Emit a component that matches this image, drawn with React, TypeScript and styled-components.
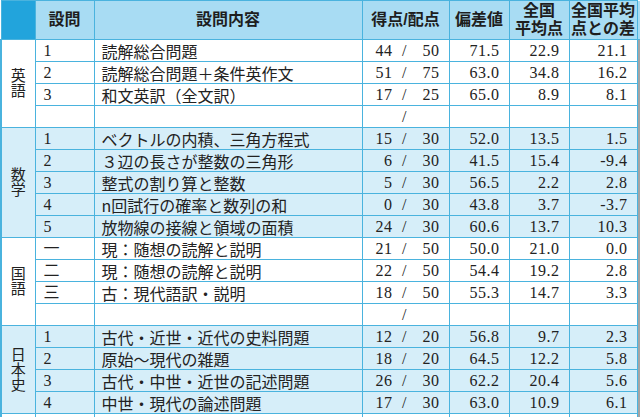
import React from 'react';
import styled, {createGlobalStyle} from 'styled-components';

const GlobalStyle = createGlobalStyle`
  html, body {
    margin: 0;
    padding: 0;
    background: #fff;
    overflow: hidden;
  }
`;

const LINE = '#4ab3de';
const HEAD_BG = '#a8dcf3';
const CORNER_BG = '#22a4dc';
const STRIPE_BG = '#d6eef9';

type Row = {
  no?: string;
  content?: string;
  got?: string;
  full?: string;
  dev?: string;
  avg?: string;
  diff?: string;
};

type Group = {
  subject: string;
  striped: boolean;
  rows: Row[];
};

const blank: Row = {};

const groups: Group[] = [
  {
    subject: '英語',
    striped: false,
    rows: [
      {no: '1', content: '読解総合問題', got: '44', full: '50', dev: '71.5', avg: '22.9', diff: '21.1'},
      {no: '2', content: '読解総合問題＋条件英作文', got: '51', full: '75', dev: '63.0', avg: '34.8', diff: '16.2'},
      {no: '3', content: '和文英訳（全文訳）', got: '17', full: '25', dev: '65.0', avg: '8.9', diff: '8.1'},
      blank,
    ],
  },
  {
    subject: '数学',
    striped: true,
    rows: [
      {no: '1', content: 'ベクトルの内積、三角方程式', got: '15', full: '30', dev: '52.0', avg: '13.5', diff: '1.5'},
      {no: '2', content: '３辺の長さが整数の三角形', got: '6', full: '30', dev: '41.5', avg: '15.4', diff: '-9.4'},
      {no: '3', content: '整式の割り算と整数', got: '5', full: '30', dev: '56.5', avg: '2.2', diff: '2.8'},
      {no: '4', content: 'n回試行の確率と数列の和', got: '0', full: '30', dev: '43.8', avg: '3.7', diff: '-3.7'},
      {no: '5', content: '放物線の接線と領域の面積', got: '24', full: '30', dev: '60.6', avg: '13.7', diff: '10.3'},
    ],
  },
  {
    subject: '国語',
    striped: false,
    rows: [
      {no: '一', content: '現：随想の読解と説明', got: '21', full: '50', dev: '50.0', avg: '21.0', diff: '0.0'},
      {no: '二', content: '現：随想の読解と説明', got: '22', full: '50', dev: '54.4', avg: '19.2', diff: '2.8'},
      {no: '三', content: '古：現代語訳・説明', got: '18', full: '50', dev: '55.3', avg: '14.7', diff: '3.3'},
      blank,
    ],
  },
  {
    subject: '日本史',
    striped: true,
    rows: [
      {no: '1', content: '古代・近世・近代の史料問題', got: '12', full: '20', dev: '56.8', avg: '9.7', diff: '2.3'},
      {no: '2', content: '原始～現代の雑題', got: '18', full: '20', dev: '64.5', avg: '12.2', diff: '5.8'},
      {no: '3', content: '古代・中世・近世の記述問題', got: '26', full: '30', dev: '62.2', avg: '20.4', diff: '5.6'},
      {no: '4', content: '中世・現代の論述問題', got: '17', full: '30', dev: '63.0', avg: '10.9', diff: '6.1'},
    ],
  },
  {
    subject: '',
    striped: false,
    rows: [blank],
  },
];

const Sheet = styled.table`
  border-collapse: collapse;
  table-layout: fixed;
  width: 640px;
  font-family: 'Noto Sans CJK JP', sans-serif;
  font-size: 16px;
  color: #222;
`;

const HeadRow = styled.tr`
  height: 39px;
`;

const HeadCell = styled.th<{$corner?: boolean}>`
  padding: 0;
  border: 1px solid ${LINE};
  background: ${(p) => (p.$corner ? CORNER_BG : HEAD_BG)};
  font-family: 'Liberation Sans', 'Noto Sans CJK JP', sans-serif;
  font-weight: 700;
  font-size: 16px;
  line-height: 18px;
  text-align: center;
  vertical-align: middle;
  color: #1e1e1e;
  white-space: nowrap;
`;

const HeadLine = styled.span`
  display: block;
`;

const EdgeHead = styled.th`
  padding: 0;
  background: ${HEAD_BG};
  border-bottom: 1px solid ${LINE};
`;

const BodyRow = styled.tr<{$striped: boolean}>`
  height: 22px;
  background: ${(p) => (p.$striped ? STRIPE_BG : '#fff')};
`;

const Cell = styled.td<{$align?: 'left' | 'right' | 'center'}>`
  padding: 0 9px 0 7px;
  border: 1px solid ${LINE};
  text-align: ${(p) => p.$align ?? 'left'};
  vertical-align: middle;
  white-space: nowrap;
  overflow: hidden;
  line-height: 20px;
`;

const SubjectCell = styled.td`
  padding: 0;
  border: 1px solid ${LINE};
  border-left-width: 2px;
  text-align: center;
  vertical-align: middle;
  font-size: 15px;
`;

const Stack = styled.span`
  display: inline-block;
  width: 1em;
  line-height: 15px;
  word-break: break-all;
  white-space: normal;
`;

const Num = styled(Cell)`
  font-family: 'Liberation Serif', serif;
  font-size: 16px;
  letter-spacing: 0.5px;
`;

const NoCell = styled(Cell)`
  font-family: 'Liberation Serif', 'Noto Sans CJK JP', serif;
  padding-left: 8px;
`;

const ScoreCell = styled.td`
  padding: 0;
  border: 1px solid ${LINE};
  vertical-align: middle;
  font-family: 'Liberation Serif', serif;
  font-size: 16px;
  line-height: 20px;
`;

const Score = styled.div`
  display: grid;
  grid-template-columns: 30px 24px 23px;
  letter-spacing: 0.5px;
`;

const ScorePart = styled.span<{$center?: boolean}>`
  text-align: ${(p) => (p.$center ? 'center' : 'right')};
`;

const EdgeCell = styled.td`
  padding: 0;
  background: #a4a4a4;
  border-bottom: 1px solid #a4a4a4;
`;

export default function App() {
  return (
    <>
      <GlobalStyle />
      <Sheet>
        <colgroup>
          <col style={{width: 34}} />
          <col style={{width: 59}} />
          <col style={{width: 268}} />
          <col style={{width: 87}} />
          <col style={{width: 60}} />
          <col style={{width: 60}} />
          <col style={{width: 68}} />
          <col style={{width: 4}} />
        </colgroup>
        <thead>
          <HeadRow>
            <HeadCell $corner />
            <HeadCell>設問</HeadCell>
            <HeadCell>設問内容</HeadCell>
            <HeadCell>得点/配点</HeadCell>
            <HeadCell>偏差値</HeadCell>
            <HeadCell>
              <HeadLine>全国</HeadLine>
              <HeadLine>平均点</HeadLine>
            </HeadCell>
            <HeadCell>
              <HeadLine>全国平均</HeadLine>
              <HeadLine>点との差</HeadLine>
            </HeadCell>
            <EdgeHead />
          </HeadRow>
        </thead>
        <tbody>
          {groups.map((g, gi) =>
            g.rows.map((r, ri) => (
              <BodyRow key={`${gi}-${ri}`} $striped={g.striped}>
                {ri === 0 && (
                  <SubjectCell rowSpan={g.rows.length}>
                    <Stack>{g.subject}</Stack>
                  </SubjectCell>
                )}
                <NoCell>{r.no}</NoCell>
                <Cell>{r.content}</Cell>
                <ScoreCell>
                  {gi < groups.length - 1 && (
                    <Score>
                      <ScorePart>{r.got}</ScorePart>
                      <ScorePart $center>/</ScorePart>
                      <ScorePart>{r.full}</ScorePart>
                    </Score>
                  )}
                </ScoreCell>
                <Num $align="right">{r.dev}</Num>
                <Num $align="right">{r.avg}</Num>
                <Num $align="right">{r.diff}</Num>
                <EdgeCell />
              </BodyRow>
            )),
          )}
        </tbody>
      </Sheet>
    </>
  );
}
